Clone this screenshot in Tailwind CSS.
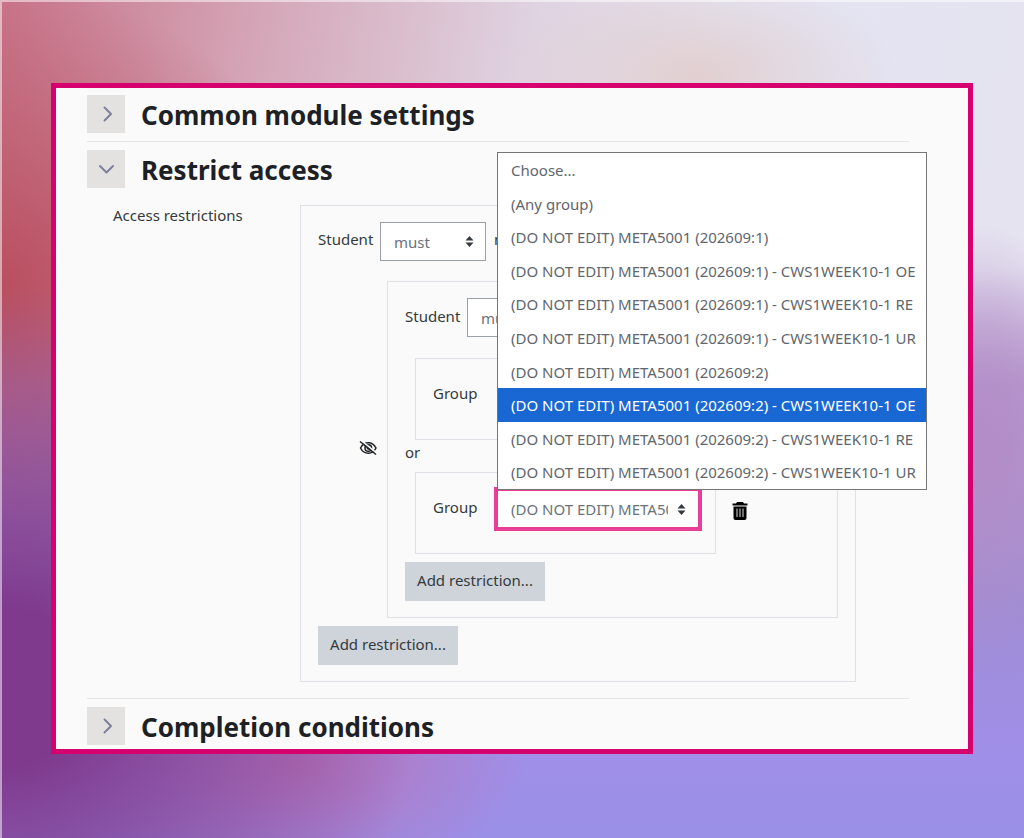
<!DOCTYPE html>
<html lang="en">
<head>
<meta charset="utf-8">
<meta name="viewport" content="width=device-width, initial-scale=1">
<title>Restrict access</title>
<script src="https://cdn.jsdelivr.net/npm/@tailwindcss/browser@4"></script>
</head>
<body class="min-h-screen overflow-x-hidden border-t-2 border-l-2 border-white/50 pt-[81px] pr-[51px] pb-[84px] pl-[49px] font-['Segoe_UI','Noto_Sans',sans-serif] text-[15px] leading-6 text-[#343a40] bg-[radial-gradient(ellipse_200px_110px_at_68%_9%,#e2cfd0_0%,#e2cfd000_100%),radial-gradient(ellipse_420px_400px_at_0%_82%,#7f3a8d_0%,#7f3a8d_20%,#7f3a8d00_100%),radial-gradient(ellipse_330px_300px_at_0%_34%,#b94f60_0%,#b94f6000_100%),radial-gradient(ellipse_230px_130px_at_29%_91%,#b573b8_0%,#b573b800_100%),radial-gradient(ellipse_110px_220px_at_96%_53%,#b38cc6_0%,#b38cc600_100%),linear-gradient(to_bottom,#e2e7f300_0%,#e2e7f300_32%,#b79bd0_46%,#9f8dd4_72%,#a08fe8_90%,#9a90e8_100%),linear-gradient(100deg,#c8748a_0%,#d5a9ba_24%,#dfd3e1_46%,#e3e4f3_62%,#e6e3ef_100%)]">

<main class="border-[5px] border-[#d6006f] bg-[#fafafa] pt-[7px] pr-[59px] pl-[31px]">

  <section class="flex h-[47px] items-start gap-4 border-b border-[#e6e6e6]">
    <button type="button" aria-label="Expand common module settings" aria-expanded="false" class="flex size-[38px] items-center justify-center bg-[#e4e1e1] text-[#7d819c]">
      <svg class="size-4" viewBox="0 0 16 16" fill="none" stroke="currentColor" stroke-width="2" stroke-linecap="round" stroke-linejoin="round"><path d="M6.500 1.500 13 8 6.500 14.500"/></svg>
    </button>
    <h2 class="text-[26px] leading-[40px] font-bold text-[#1d2125]">Common module settings</h2>
  </section>

  <section class="border-b border-[#e6e6e6] pt-2 pb-4">
    <div class="flex items-start gap-4">
      <button type="button" aria-label="Collapse restrict access" aria-expanded="true" class="flex size-[38px] items-center justify-center bg-[#e4e1e1] text-[#7d819c]">
        <svg class="size-4" viewBox="0 0 16 16" fill="none" stroke="currentColor" stroke-width="2" stroke-linecap="round" stroke-linejoin="round"><path d="M2 5 8.500 11.500 15 5"/></svg>
      </button>
      <h2 class="text-[26px] leading-[40px] font-bold text-[#1d2125]">Restrict access</h2>
    </div>

    <div class="mt-[15px] flex items-start">
      <h3 class="w-[213px] shrink-0 pl-[26px] leading-5">Access restrictions</h3>

      <div class="mr-[53px] min-w-0 flex-1 border border-[#dee2e6] px-[17px] py-4">
        <div class="flex items-start leading-[34px]">
          <label for="outer-must" class="w-[62px] shrink-0">Student</label>
          <span class="relative">
            <select id="outer-must" class="block h-[39px] w-[106px] appearance-none border border-[#9aa0a8] bg-white pr-7 pl-[13px] text-[#6a737b]"><option>must</option><option>must not</option></select>
            <svg class="pointer-events-none absolute top-[14px] right-3 h-[11px] w-[9px]" viewBox="0 0 9 11" fill="#343a40"><path d="M4.500 0 8.500 4.500h-8zM4.500 11 .5 6.500h8z"/></svg>
          </span>
          <span class="ml-2">match</span>
        </div>

        <div class="mt-5 flex items-center">
          <button type="button" aria-label="Toggle visibility" class="flex w-[69px] shrink-0 justify-end pr-[10px] pb-1">
            <svg class="size-[18px]" viewBox="0 0 18 18" fill="none" stroke="#1d2125" stroke-width="1.500"><path d="M1.500 9C3.500 5 6 3.700 9.500 3.700S15 5 17 9c-2 4-4.500 5.300-7.500 5.300S3.500 13 1.500 9z"/><circle cx="9.300" cy="9" r="3.300"/><circle cx="9.500" cy="8.800" r="1.200"/><path d="M2.500 1.800 18 14.300" stroke="#fafafa" stroke-width="1.500"/><path d="M1 2.500 17 15.500"/></svg>
          </button>

          <div class="min-w-0 flex-1 border border-[#dee2e6] px-[17px] pt-4 pb-4">
            <div class="flex items-start leading-[36px]">
              <label for="inner-must" class="w-[62px] shrink-0">Student</label>
              <select id="inner-must" class="block h-[39px] w-[106px] appearance-none border border-[#9aa0a8] bg-white pr-7 pl-[13px] text-[#6a737b]"><option>must</option><option>must not</option></select>
            </div>

            <div class="mt-[21px] ml-[10px] flex h-[82px] w-[301px] items-start border border-[#dee2e6] px-[17px] pt-[22px]">Group</div>

            <p class="h-8 leading-6">or</p>

            <div class="ml-[10px] flex items-center">
              <div class="flex h-[82px] w-[301px] items-start border border-[#dee2e6] pt-[14px] pl-[17px]">
                <label for="group" class="w-[61px] pt-2">Group</label>
                <div class="relative">
                  <div class="border-4 border-[#e83e9a]">
                    <select id="group" class="block h-9 w-[200px] appearance-none bg-white pr-[30px] pl-[13px] text-[#6a737b]"><option>(DO NOT EDIT) META5001 (202609:2) - CWS1WEEK10-1 OE</option></select>
                  </div>
                  <svg class="pointer-events-none absolute top-[17px] right-4 h-[11px] w-[9px]" viewBox="0 0 9 11" fill="#343a40"><path d="M4.500 0 8.500 4.500h-8zM4.500 11 .5 6.500h8z"/></svg>
                  <ul role="listbox" aria-label="Group" class="absolute bottom-[41px] left-[3px] grid h-[338px] w-[430px] auto-rows-fr border border-[#767676] bg-white text-[#5f666e] *:overflow-hidden *:pl-[13px] *:leading-[34px] *:whitespace-nowrap *:min-h-0">
                    <li role="option">Choose...</li>
                    <li role="option">(Any group)</li>
                    <li role="option">(DO NOT EDIT) META5001 (202609:1)</li>
                    <li role="option">(DO NOT EDIT) META5001 (202609:1) - CWS1WEEK10-1 OE</li>
                    <li role="option">(DO NOT EDIT) META5001 (202609:1) - CWS1WEEK10-1 RE</li>
                    <li role="option">(DO NOT EDIT) META5001 (202609:1) - CWS1WEEK10-1 UR</li>
                    <li role="option">(DO NOT EDIT) META5001 (202609:2)</li>
                    <li role="option" aria-selected="true" class="bg-[#1967d2] text-white">(DO NOT EDIT) META5001 (202609:2) - CWS1WEEK10-1 OE</li>
                    <li role="option">(DO NOT EDIT) META5001 (202609:2) - CWS1WEEK10-1 RE</li>
                    <li role="option">(DO NOT EDIT) META5001 (202609:2) - CWS1WEEK10-1 UR</li>
                  </ul>
                </div>
              </div>
              <button type="button" aria-label="Delete" class="ml-4 pb-1">
                <svg class="h-[18px] w-4" viewBox="0 0 16 18"><path fill="#000" d="M5 0h6l1 1.500h3.500v2H.5v-2H4zM1.500 4.500h13V16a2 2 0 0 1-2 2h-9a2 2 0 0 1-2-2z"/><path d="M5 6.500v8.500M8 6.500v8.500M11 6.500v8.500" stroke="#ddd" stroke-width="1"/></svg>
              </button>
            </div>

            <button type="button" class="mt-2 block h-[39px] w-[140px] bg-[#ced4da] pb-1 text-[#343a40]">Add restriction...</button>
          </div>
        </div>

        <button type="button" class="mt-2 block h-[39px] w-[140px] bg-[#ced4da] pb-1 text-[#343a40]">Add restriction...</button>
      </div>
    </div>
  </section>

  <section class="flex items-start gap-4 pt-2 pb-[2px]">
    <button type="button" aria-label="Expand completion conditions" aria-expanded="false" class="flex size-[38px] items-center justify-center bg-[#e4e1e1] text-[#7d819c]">
      <svg class="size-4" viewBox="0 0 16 16" fill="none" stroke="currentColor" stroke-width="2" stroke-linecap="round" stroke-linejoin="round"><path d="M6.500 1.500 13 8 6.500 14.500"/></svg>
    </button>
    <h2 class="text-[26px] leading-[40px] font-bold text-[#1d2125]">Completion conditions</h2>
  </section>
</main>
</body>
</html>
